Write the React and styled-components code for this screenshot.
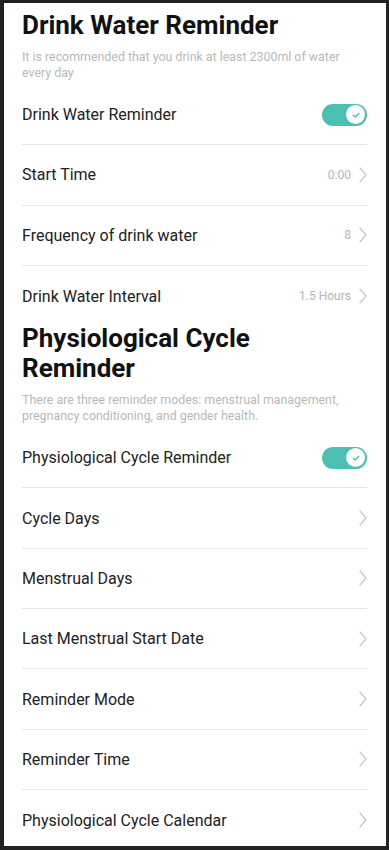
import React, { useState } from "react";
import styled, { createGlobalStyle } from "styled-components";

const GlobalStyle = createGlobalStyle`
  html, body {
    margin: 0;
    padding: 0;
    background: #222222;
  }
  body {
    font-family: Roboto, "Noto Sans", Arial, sans-serif;
  }
`;

const Frame = styled.div`
  width: 382px;
  height: 843px;
  margin: 3px 3px 4px 4px;
  background: #ffffff;
  overflow: hidden;
  padding: 7px 19px 0 18px;
  box-sizing: border-box;
`;

const Heading = styled.h1`
  margin: ${(p) => p.$top || 0}px 0 0;
  font-size: 26px;
  line-height: 30px;
  font-weight: 700;
  color: #111111;
`;

const Note = styled.p`
  margin: 9px 0 4px;
  font-size: 12.4px;
  line-height: 16px;
  color: #b9b9b9;
`;

const Row = styled.div`
  height: 60.3px;
  display: flex;
  align-items: center;
  justify-content: space-between;
  box-sizing: border-box;
  border-bottom: ${(p) => (p.$last ? "none" : "1.5px solid #e6e6e6")};
`;

const Label = styled.span`
  font-size: 16px;
  color: #222222;
`;

const Side = styled.div`
  display: flex;
  align-items: center;
  gap: 8px;
`;

const Value = styled.span`
  font-size: 12px;
  color: #b5b5b5;
`;

const Track = styled.button`
  width: 45px;
  height: 22px;
  border: none;
  padding: 0 2px;
  border-radius: 11px;
  background: ${(p) => (p.$on ? "#4bbfb1" : "#dddddd")};
  display: flex;
  align-items: center;
  justify-content: ${(p) => (p.$on ? "flex-end" : "flex-start")};
  cursor: pointer;
`;

const Knob = styled.span`
  width: 19px;
  height: 19px;
  border-radius: 50%;
  background: #ffffff;
  display: flex;
  align-items: center;
  justify-content: center;
`;

const Check = () => (
  <svg width="10" height="10" viewBox="0 0 10 10" fill="none">
    <path d="M2.2 5.2 L4.2 7 L7.8 3.2" stroke="#4bbfb1" strokeWidth="1.4" strokeLinecap="round" strokeLinejoin="round" />
  </svg>
);

const Chevron = () => (
  <svg width="8" height="16" viewBox="0 0 8 16" fill="none">
    <path d="M1 1 L7 8 L1 15" stroke="#c9c9c9" strokeWidth="1.3" strokeLinecap="round" strokeLinejoin="round" />
  </svg>
);

const Toggle = () => {
  const [on, setOn] = useState(true);
  return (
    <Track $on={on} onClick={() => setOn(!on)} aria-pressed={on}>
      <Knob>{on && <Check />}</Knob>
    </Track>
  );
};

const NavRow = ({ label, value, last }) => (
  <Row $last={last}>
    <Label>{label}</Label>
    <Side>
      {value && <Value>{value}</Value>}
      <Chevron />
    </Side>
  </Row>
);

const cycleRows = [
  "Cycle Days",
  "Menstrual Days",
  "Last Menstrual Start Date",
  "Reminder Mode",
  "Reminder Time",
  "Physiological Cycle Calendar",
];

export default function App() {
  return (
    <>
      <GlobalStyle />
      <Frame>
        <Heading>Drink Water Reminder</Heading>
        <Note>It is recommended that you drink at least 2300ml of water every day</Note>
        <Row>
          <Label>Drink Water Reminder</Label>
          <Toggle />
        </Row>
        <NavRow label="Start Time" value="0:00" />
        <NavRow label="Frequency of drink water" value="8" />
        <NavRow label="Drink Water Interval" value="1.5 Hours" last />

        <Heading $top={-3}>Physiological Cycle Reminder</Heading>
        <Note>
          There are three reminder modes: menstrual management, pregnancy conditioning, and gender health.
        </Note>
        <Row>
          <Label>Physiological Cycle Reminder</Label>
          <Toggle />
        </Row>
        {cycleRows.map((r, i) => (
          <NavRow key={r} label={r} last={i === cycleRows.length - 1} />
        ))}
      </Frame>
    </>
  );
}
